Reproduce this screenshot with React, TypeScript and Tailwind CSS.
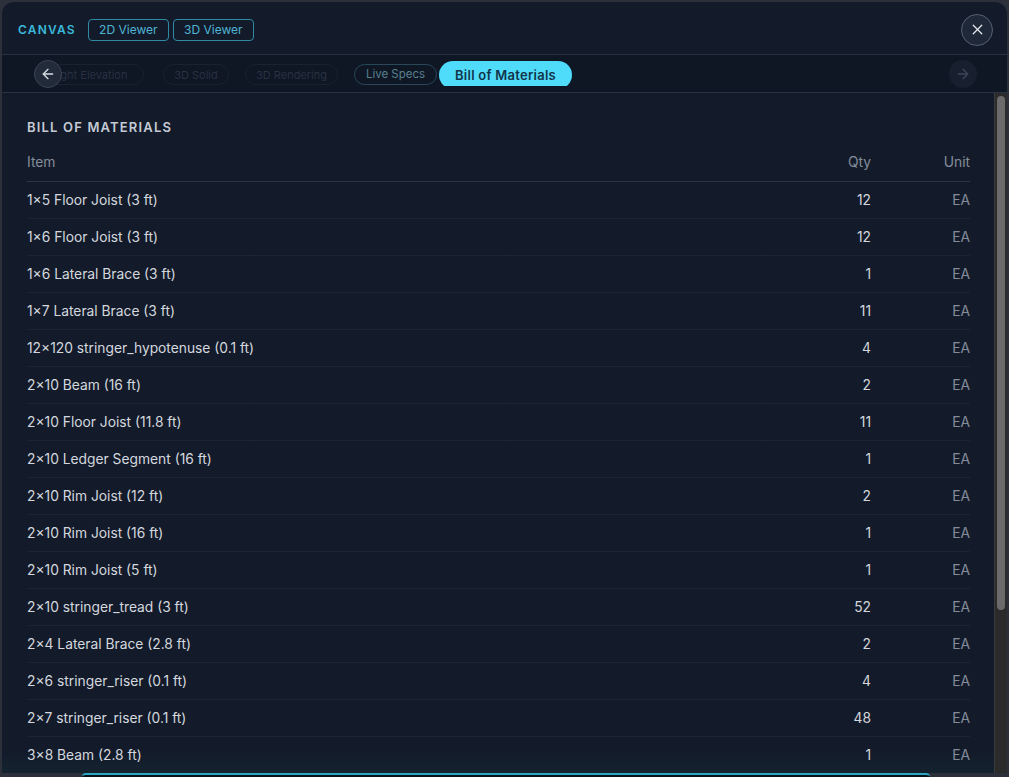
import React from 'react';
import { ArrowLeft, ArrowRight, X } from 'lucide-react';

const rows: [string, number][] = [
  ['1×5 Floor Joist (3 ft)', 12],
  ['1×6 Floor Joist (3 ft)', 12],
  ['1×6 Lateral Brace (3 ft)', 1],
  ['1×7 Lateral Brace (3 ft)', 11],
  ['12×120 stringer_hypotenuse (0.1 ft)', 4],
  ['2×10 Beam (16 ft)', 2],
  ['2×10 Floor Joist (11.8 ft)', 11],
  ['2×10 Ledger Segment (16 ft)', 1],
  ['2×10 Rim Joist (12 ft)', 2],
  ['2×10 Rim Joist (16 ft)', 1],
  ['2×10 Rim Joist (5 ft)', 1],
  ['2×10 stringer_tread (3 ft)', 52],
  ['2×4 Lateral Brace (2.8 ft)', 2],
  ['2×6 stringer_riser (0.1 ft)', 4],
  ['2×7 stringer_riser (0.1 ft)', 48],
  ['3×8 Beam (2.8 ft)', 1],
];

export default function App() {
  return (
    <div className="h-[777px] w-[1009px] overflow-hidden bg-[#2b303a] pt-[2px] pl-[2px] pr-[2px] font-['Inter',sans-serif]">
      <div className="flex h-[771px] flex-col overflow-hidden rounded-t-[12px] bg-[#131b2b]">
        {/* Top bar */}
        <div className="flex h-[53px] shrink-0 items-center justify-between border-b border-[#2a3240] pl-4 pr-[14px] pt-[3px]">
          <div className="flex items-center">
            <span className="mr-[12px] text-[12px] font-semibold tracking-[0.1em] text-[#3ab9d8]">CANVAS</span>
            <button className="mr-1 flex h-[22px] w-[81px] items-center justify-center rounded-[4px] border border-[#2f8aa6] text-[12px] text-[#4fb4d2]">2D Viewer</button>
            <button className="flex h-[22px] w-[81px] items-center justify-center rounded-[4px] border border-[#2f8aa6] text-[12px] text-[#4fb4d2]">3D Viewer</button>
          </div>
          <button className="flex h-8 w-8 items-center justify-center rounded-full border border-[#56606e] bg-[#1e2838] text-[#e4e8ee]">
            <X size={17} strokeWidth={1.8} />
          </button>
        </div>

        {/* Tab strip */}
        <div className="relative h-[38px] shrink-0 border-b border-[#2a3240] bg-[#0f1624]">
          <div className="flex h-[31px] items-start overflow-hidden pl-[32px]">
            <span className="mt-[9px] flex h-[21px] w-[110px] items-center justify-center rounded-full border border-[#1a2230] pt-px text-[11px] text-[#283242]">Right Elevation</span>
            <span className="ml-[19px] mt-[9px] flex h-[21px] w-[66px] items-center justify-center rounded-full border border-[#1a2230] pt-px text-[11px] text-[#283242]">3D Solid</span>
            <span className="ml-[16px] mt-[9px] flex h-[21px] w-[93px] items-center justify-center rounded-full border border-[#1a2230] pt-px text-[11px] text-[#283242]">3D Rendering</span>
            <span className="ml-[16px] mt-[9px] flex h-[21px] w-[83px] items-center justify-center rounded-full border border-[#29485a] pt-px text-[11.5px] text-[#58808f]">Live Specs</span>
            <span className="ml-[2px] mt-[6px] flex h-[28px] w-[133px] shrink-0 items-center justify-center rounded-full bg-[#4fdcfb] pt-px text-[13px] font-semibold tracking-[0.02em] text-[#12344a]">Bill of Materials</span>
          </div>
          <button className="absolute left-[32px] top-[5px] flex h-[28px] w-[28px] items-center justify-center rounded-full border border-[#3a4452] bg-[#222b39] text-[#d8dde4]">
            <ArrowLeft size={16} strokeWidth={2} />
          </button>
          <button className="absolute right-[30px] top-[5px] flex h-[28px] w-[28px] items-center justify-center rounded-full bg-[#182030] text-[#3c4655]">
            <ArrowRight size={16} strokeWidth={2} />
          </button>
        </div>

        {/* Table area */}
        <div className="flex min-h-0 flex-1 bg-gradient-to-b from-[#131b2b] from-97% to-[#14232f]">
          <div className="min-w-0 flex-1 overflow-hidden pl-[25px] pr-[24px] pt-[25px]">
            <div className="text-[13px] font-semibold leading-[18px] tracking-[0.09em] text-[#c4cad4]">BILL OF MATERIALS</div>
            <div className="mt-[9px] flex h-[37px] items-center border-b border-[#2d3644] pb-px text-[13.8px] text-[#858c99]">
              <span className="flex-1">Item</span>
              <span className="w-[60px] text-right">Qty</span>
              <span className="w-[99px] text-right">Unit</span>
            </div>
            {rows.map(([item, qty], index) => (
              <div key={index} className="flex h-[37px] shrink-0 items-center border-b border-[#1c2433] text-[13.8px]">
                <span className="flex-1 text-[#d4d8de]">{item}</span>
                <span className="w-[60px] text-right text-[#d4d8de]">{qty}</span>
                <span className="w-[99px] text-right text-[#858c99]">EA</span>
              </div>
            ))}
          </div>
          {/* Scrollbar */}
          <div className="w-[13px] shrink-0 border-l border-[#3a3a3a] bg-[#2b2b2b] px-[2px] pt-[3px]">
            <div className="h-[514px] rounded-full bg-[#6b6b6b]" />
          </div>
        </div>
      </div>
      <div className="ml-[80px] h-[4px] w-[848px] rounded-t-[14px] border-t-[2px] border-[#2ba7c4] bg-[#07131c]" />
    </div>
  );
}
